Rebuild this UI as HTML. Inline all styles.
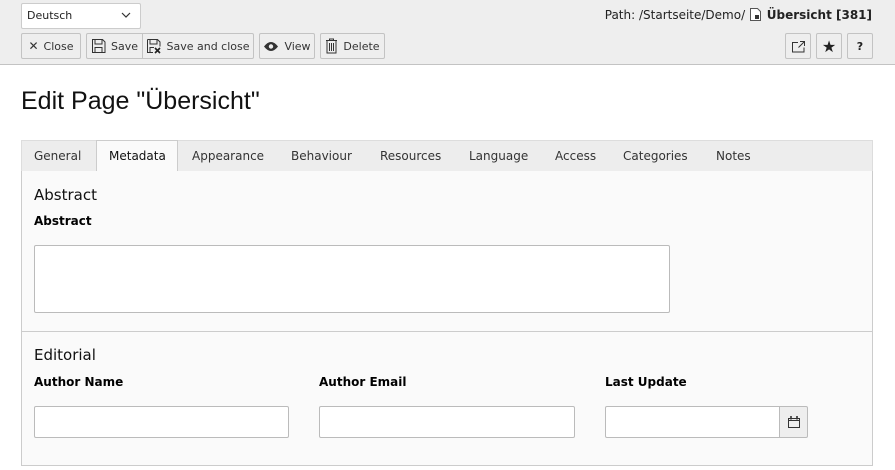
<!DOCTYPE html><html><head><meta charset="utf-8"><style>
*{box-sizing:border-box;margin:0;padding:0}
body{width:895px;height:470px;background:#fff;font-family:"DejaVu Sans",Verdana,sans-serif;font-size:11px;color:#212121;position:relative;overflow:hidden}
.a{position:absolute}
.top{left:0;top:0;width:895px;height:65px;background:#eee;border-bottom:1px solid #c3c3c3}
.btn{position:absolute;top:33px;height:26px;background:#eee;border:1px solid #c3c3c3;border-radius:2px;display:flex;align-items:center;justify-content:center;gap:5px;font-size:11px;color:#333}
.tabs{left:21px;top:140px;width:852px;height:32px;background:#ededed;border:1px solid #ddd;border-bottom:1px solid #ccc}
.tab{position:absolute;top:149px;font-size:12px;color:#333}
.panel{left:21px;top:171px;width:852px;height:295px;background:#fafafa;border:1px solid #ccc;border-top:none}
h2{position:absolute;font-weight:normal;font-size:15px;color:#111}
.lab{position:absolute;font-weight:bold;font-size:12px;color:#000}
.in{position:absolute;background:#fff;border:1px solid #bbb;border-radius:2px}
</style></head><body>
<div class="a top"></div>
<div class="in" style="left:21px;top:3px;width:120px;height:26px;border-color:#ccc"></div>
<div class="a" style="left:27px;top:9px;font-size:11px">Deutsch</div>
<svg class="a" style="left:121px;top:12px" width="10" height="7"><path d="M1 1l4 4 4-4" stroke="#333" fill="none" stroke-width="1.2"/></svg>
<div class="btn" style="left:21px;width:60px"><b style="font-size:12px">✕</b>Close</div>
<div class="btn" style="left:86px;width:57px;border-radius:2px 0 0 2px"><svg width="15" height="16"><path d="M1.5 1.5h10l2.5 2.5v10.5h-12.5z M4 1.5v4.5h7v-4.5 M4 14.5v-5h7v5" stroke="#333" fill="none"/></svg>Save</div>
<div class="btn" style="left:142px;width:112px;border-radius:0 2px 2px 0"><svg width="15" height="16"><path d="M1.5 1.5h10l2.5 2.5v4.5 M7 14.5h-5.5v-13 M4 1.5v4.5h7v-4.5 M4 14.5v-5h4" stroke="#333" fill="none"/><path d="M9 10l5 5M14 10l-5 5" stroke="#222" stroke-width="1.6"/></svg>Save and close</div>
<div class="btn" style="left:259px;width:56px"><svg width="16" height="11"><path d="M1 5.5q7-9 14 0q-7 9-14 0z" fill="#333"/><circle cx="8" cy="5.5" r="2.2" fill="#eee"/></svg>View</div>
<div class="btn" style="left:320px;width:65px"><svg width="13" height="16"><path d="M1 2.5h11M4.5 2.5v-1.5h4v1.5M2 2.5v12.5h9v-12.5M4.5 5v8M6.5 5v8M8.5 5v8" stroke="#333" fill="none"/></svg>Delete</div>
<div class="a" style="right:23px;top:7px;font-size:12px;color:#222">Path: /Startseite/Demo/ <svg width="14" height="15" style="vertical-align:-3px"><path d="M1.5 1.5h7l3 3v9h-10z" stroke="#555" fill="#fff"/><rect x="6" y="8" width="4" height="4" fill="#333"/></svg> <b>Übersicht [381]</b></div>
<div class="btn" style="left:785px;width:26px"><svg width="15" height="13"><path d="M7 2.5h-5.5v9.5h11.5v-4.5 M9 1.5h4.5v4.5 M13.5 1.5l-6 6" stroke="#333" fill="none"/></svg></div>
<div class="btn" style="left:816px;width:26px;font-size:16px;color:#222">★</div>
<div class="btn" style="left:847px;width:26px;font-weight:bold;color:#222">?</div>
<div class="a" style="left:21px;top:87px;font-family:'Liberation Sans',sans-serif;font-size:25px;color:#111">Edit Page "Übersicht"</div>
<div class="a tabs"></div>
<div class="a" style="left:96px;top:140px;width:82px;height:32px;background:#fafafa;border:1px solid #ccc;border-bottom:none"></div>
<div class="tab" style="left:34px">General</div><div class="tab" style="left:109px;color:#111">Metadata</div><div class="tab" style="left:192px">Appearance</div><div class="tab" style="left:291px">Behaviour</div><div class="tab" style="left:380px">Resources</div><div class="tab" style="left:469px">Language</div><div class="tab" style="left:555px">Access</div><div class="tab" style="left:623px">Categories</div><div class="tab" style="left:716px">Notes</div>
<div class="a panel"></div>
<h2 style="left:34px;top:186px">Abstract</h2>
<div class="lab" style="left:34px;top:214px">Abstract</div>
<div class="in" style="left:34px;top:245px;width:636px;height:68px"></div>
<div class="a" style="left:22px;top:331px;width:850px;height:1px;background:#ccc"></div>
<h2 style="left:34px;top:346px">Editorial</h2>
<div class="lab" style="left:34px;top:375px">Author Name</div>
<div class="lab" style="left:319px;top:375px">Author Email</div>
<div class="lab" style="left:605px;top:375px">Last Update</div>
<div class="in" style="left:34px;top:406px;width:255px;height:32px"></div>
<div class="in" style="left:319px;top:406px;width:256px;height:32px"></div>
<div class="in" style="left:605px;top:406px;width:175px;height:32px;border-radius:2px 0 0 2px"></div>
<div class="in" style="left:779px;top:406px;width:29px;height:32px;background:#eee;border-radius:0 2px 2px 0;display:flex;align-items:center;justify-content:center"><svg width="14" height="14"><path d="M1.5 3.5h11v9h-11z M1.5 5.5h11" stroke="#333" fill="none"/><path d="M4 1v3.5M10 1v3.5" stroke="#333" stroke-width="1.6"/></svg></div>
</body></html>
